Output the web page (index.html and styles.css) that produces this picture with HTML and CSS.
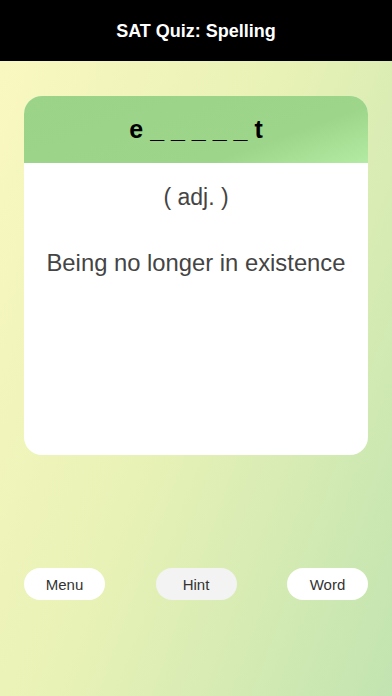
FILE: index.html
```html
<!DOCTYPE html>
<html>
<head>
<meta charset="utf-8">
<link rel="stylesheet" href="styles.css">
</head>
<body>
<div class="app">
  <header class="topbar">SAT Quiz: Spelling</header>
  <main class="content">
    <section class="card">
      <div class="card-head">e _ _ _ _ _ t</div>
      <div class="card-body">
        <div class="pos">( adj. )</div>
        <div class="def">Being no longer in existence</div>
      </div>
    </section>
    <nav class="actions">
      <button class="btn">Menu</button>
      <button class="btn btn-hint">Hint</button>
      <button class="btn">Word</button>
    </nav>
  </main>
</div>
</body>
</html>
```
FILE: styles.css
```css
html, body {
  margin: 0;
  padding: 0;
}
body {
  width: 392px;
  height: 696px;
  overflow: hidden;
  font-family: "Liberation Sans", Arial, sans-serif;
}
.app {
  display: flex;
  flex-direction: column;
  height: 696px;
}
.topbar {
  height: 61px;
  flex: none;
  background: #000;
  color: #fff;
  font-weight: bold;
  font-size: 18px;
  padding-top: 2px;
  box-sizing: border-box;
  display: flex;
  align-items: center;
  justify-content: center;
}
.content {
  flex: 1;
  background: linear-gradient(110deg, #f9f8c0 0%, #e9f2b6 45%, #c2e4b0 100%);
  padding: 35px 24px 0;
  display: flex;
  flex-direction: column;
}
.card {
  height: 359px;
  border-radius: 18px;
  overflow: hidden;
  background: #fff;
  display: flex;
  flex-direction: column;
}
.card-head {
  height: 67px;
  flex: none;
  background: linear-gradient(160deg, #9bd488 0%, #9dd68a 70%, #b4eba4 100%);
  color: #000;
  font-weight: bold;
  font-size: 25px;
  display: flex;
  align-items: center;
  justify-content: center;
}
.card-body {
  flex: 1;
  display: flex;
  flex-direction: column;
  align-items: center;
  color: #444;
}
.pos {
  font-size: 23px;
  margin-top: 21px;
}
.def {
  font-size: 23.8px;
  margin-top: 38px;
}
.actions {
  margin-top: 113px;
  display: flex;
  justify-content: space-between;
}
.btn {
  width: 81px;
  height: 32px;
  border: none;
  border-radius: 16px;
  background: #fff;
  color: #333;
  font-family: "Liberation Sans", Arial, sans-serif;
  font-size: 15px;
  padding: 0;
}
.btn-hint {
  background: #f2f3f2;
}
```
